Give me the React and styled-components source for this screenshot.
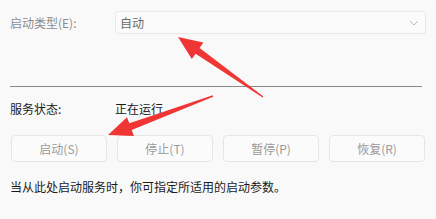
import React from "react";
import styled, { createGlobalStyle } from "styled-components";

const GlobalStyle = createGlobalStyle`
  html, body {
    margin: 0;
    padding: 0;
    background: #f9f9f9;
  }
  body {
    font-family: "Noto Sans CJK SC", "Noto Sans", sans-serif;
  }
`;

const Page = styled.div`
  position: relative;
  width: 436px;
  height: 219px;
  box-sizing: border-box;
  padding: 11px 10px 0 10px;
  display: flex;
  flex-direction: column;
  background: #f9f9f9;
  overflow: hidden;
`;

const Row = styled.div`
  display: flex;
  align-items: center;
  height: ${(props) => props.height || 16}px;
  margin-top: ${(props) => props.top || 0}px;
`;

const Label = styled.span`
  width: 105px;
  font-size: 12px;
  line-height: 16px;
  color: ${(props) => (props.muted ? "#8c8c8c" : "#1b1b1b")};
`;

const Value = styled.span`
  font-size: 12px;
  line-height: 16px;
  color: #1b1b1b;
`;

const Select = styled.div`
  flex: 1;
  height: 23px;
  box-sizing: border-box;
  display: flex;
  align-items: center;
  justify-content: space-between;
  padding: 0 6px 0 4px;
  background: #fbfbfb;
  border: 1px solid #e8e8e8;
  border-radius: 3px;
  font-size: 12px;
  color: #6a6a6a;
`;

const Divider = styled.div`
  margin-top: 52px;
  margin-right: 4px;
  height: 1px;
  background: #8a8a8a;
`;

const Buttons = styled.div`
  display: grid;
  grid-template-columns: repeat(4, 1fr);
  column-gap: 10px;
  margin: 18px 1px 0 1px;
`;

const Button = styled.div`
  height: 27px;
  box-sizing: border-box;
  display: flex;
  align-items: center;
  justify-content: center;
  background: #fbfbfb;
  border: 1px solid #e6e6e6;
  border-radius: 4px;
  font-size: 12px;
  color: #9a9a9a;
`;

const Note = styled.div`
  margin-top: 17px;
  font-size: 12px;
  line-height: 16px;
  color: #1b1b1b;
`;

const Overlay = styled.svg`
  position: absolute;
  left: 0;
  top: 0;
  pointer-events: none;
`;

const Chevron = () => (
  <svg width="10" height="6" viewBox="0 0 10 6">
    <path d="M1 1 L5 5 L9 1" fill="none" stroke="#b8b8b8" strokeWidth="1" />
  </svg>
);

const buttons = ["启动(S)", "停止(T)", "暂停(P)", "恢复(R)"];

export default function App() {
  return (
    <>
      <GlobalStyle />
      <Page>
        <Row height={23}>
          <Label muted>启动类型(E):</Label>
          <Select>
            <span>自动</span>
            <Chevron />
          </Select>
        </Row>
        <Divider />
        <Row top={14}>
          <Label>服务状态:</Label>
          <Value>正在运行</Value>
        </Row>
        <Buttons>
          {buttons.map((b) => (
            <Button key={b}>{b}</Button>
          ))}
        </Buttons>
        <Note>当从此处启动服务时，你可指定所适用的启动参数。</Note>
        <Overlay width="436" height="219" viewBox="0 0 436 219">
          <polygon
            fill="#f03535"
            points="178,37 203.4,42.6 199.6,47.9 263.4,96.4 262.6,97.6 195.6,53.7 191.8,59"
          />
          <polygon
            fill="#f03535"
            points="108,135 134,136 131.7,129.9 213.2,96.7 212.8,95.3 129.3,123.3 127,117.2"
          />
        </Overlay>
      </Page>
    </>
  );
}
